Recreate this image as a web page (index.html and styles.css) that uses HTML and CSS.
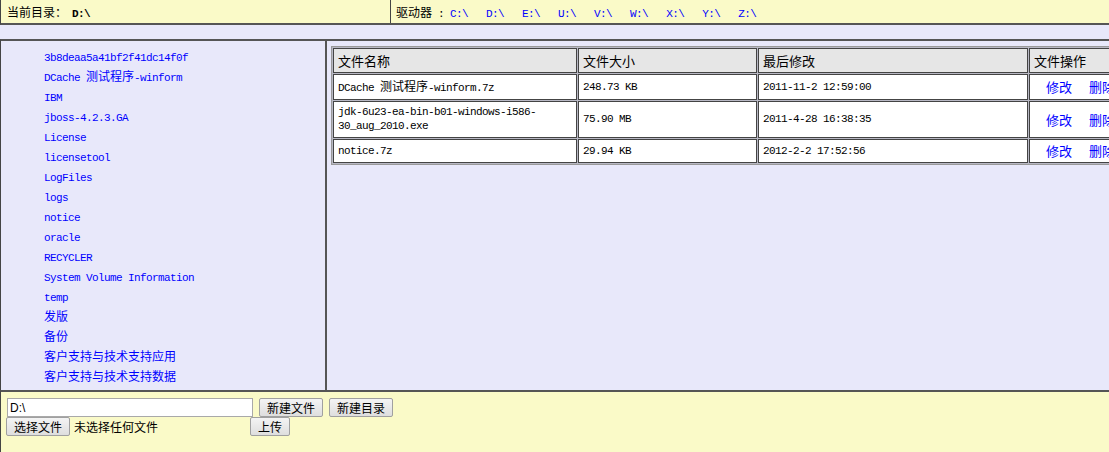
FILE: index.html
```html
<!DOCTYPE html>
<html lang="zh">
<head>
<meta charset="utf-8">
<title>文件管理</title>
<link rel="stylesheet" href="styles.css">
</head>
<body>
<div class="top">
  <div class="cur"><span class="c">当前目录：</span><b class="m path">D:\</b></div>
  <div class="drives"><span class="c">驱动器</span><span class="m"> : </span><a class="m drv" href="#">C:\</a><a class="m drv" href="#">D:\</a><a class="m drv" href="#">E:\</a><a class="m drv" href="#">U:\</a><a class="m drv" href="#">V:\</a><a class="m drv" href="#">W:\</a><a class="m drv" href="#">X:\</a><a class="m drv" href="#">Y:\</a><a class="m drv" href="#">Z:\</a></div>
</div>
<div class="gap"></div>
<div class="main">
  <div class="left">
    <ul class="dirs">
      <li><a class="m" href="#">3b8deaa5a41bf2f41dc14f0f</a></li>
      <li><a class="m" href="#">DCache <span class="c">测试程序</span>-winform</a></li>
      <li><a class="m" href="#">IBM</a></li>
      <li><a class="m" href="#">jboss-4.2.3.GA</a></li>
      <li><a class="m" href="#">License</a></li>
      <li><a class="m" href="#">licensetool</a></li>
      <li><a class="m" href="#">LogFiles</a></li>
      <li><a class="m" href="#">logs</a></li>
      <li><a class="m" href="#">notice</a></li>
      <li><a class="m" href="#">oracle</a></li>
      <li><a class="m" href="#">RECYCLER</a></li>
      <li><a class="m" href="#">System Volume Information</a></li>
      <li><a class="m" href="#">temp</a></li>
      <li><a class="c" href="#">发版</a></li>
      <li><a class="c" href="#">备份</a></li>
      <li><a class="c" href="#">客户支持与技术支持应用</a></li>
      <li><a class="c" href="#">客户支持与技术支持数据</a></li>
    </ul>
  </div>
  <div class="right">
    <table class="files">
      <colgroup>
        <col class="w-name"><col class="w-size"><col class="w-date"><col class="w-ops">
      </colgroup>
      <thead>
        <tr><th>文件名称</th><th>文件大小</th><th>最后修改</th><th>文件操作</th></tr>
      </thead>
      <tbody>
        <tr>
          <td class="m">DCache <span class="c">测试程序</span>-winform.7z</td>
          <td class="m">248.73 KB</td>
          <td class="m">2011-11-2 12:59:00</td>
          <td class="ops"><a href="#" class="edit">修改</a><a href="#">删除</a></td>
        </tr>
        <tr class="tall">
          <td class="m">jdk-6u23-ea-bin-b01-windows-i586-<br>30_aug_2010.exe</td>
          <td class="m">75.90 MB</td>
          <td class="m">2011-4-28 16:38:35</td>
          <td class="ops"><a href="#" class="edit">修改</a><a href="#">删除</a></td>
        </tr>
        <tr>
          <td class="m">notice.7z</td>
          <td class="m">29.94 KB</td>
          <td class="m">2012-2-2 17:52:56</td>
          <td class="ops"><a href="#" class="edit">修改</a><a href="#">删除</a></td>
        </tr>
      </tbody>
    </table>
  </div>
</div>
<div class="bottom">
  <div class="row1">
    <input class="pathbox" type="text" value="D:\">
    <button class="btn b4">新建文件</button>
    <button class="btn b4">新建目录</button>
  </div>
  <div class="row2">
    <button class="btn b4 choose">选择文件</button>
    <span class="nofile">未选择任何文件</span>
    <button class="btn b2">上传</button>
  </div>
</div>
</body>
</html>
```

FILE: styles.css
```css
html, body {
  margin: 0;
  padding: 0;
}
body {
  width: 1109px;
  height: 452px;
  overflow: hidden;
  background: #e8e8fa;
  font-family: "Noto Sans CJK SC", "Liberation Sans", sans-serif;
  font-size: 12px;
  color: #000;
  display: flex;
  flex-direction: column;
}
a { color: #0000ff; text-decoration: none; }

.m {
  font-family: "Liberation Mono", "Noto Sans CJK SC", monospace;
  font-size: 11px;
  letter-spacing: -0.6px;
}
.c {
  font-family: "Noto Sans CJK SC", sans-serif;
  font-size: 12px;
  letter-spacing: 0;
}

/* top bar */
.top {
  height: 23px;
  flex: none;
  display: flex;
  background: #fafac8;
  border-left: 1px solid #444;
  border-bottom: 2px solid #555;
  line-height: 23px;
}
.cur {
  width: 383px;
  padding-left: 6px;
  border-right: 1px solid #444;
  white-space: nowrap;
}
.path { margin-left: 5px; font-weight: bold; }
.drives {
  padding-left: 5px;
  white-space: nowrap;
}
.drv { margin-right: 18px; }

.gap { height: 14px; flex: none; }

/* main area */
.main {
  flex: none;
  height: 349px;
  display: flex;
  border-top: 2px solid #555;
  border-left: 1px solid #444;
}
.left {
  width: 324px;
  flex: none;
  border-right: 2px solid #555;
  overflow: hidden;
}
.dirs {
  list-style: none;
  margin: 0;
  padding: 5px 0 0 43px;
}
.dirs li {
  height: 20px;
  line-height: 20px;
  white-space: nowrap;
}
.right {
  flex: 1;
  overflow: hidden;
  padding: 5px 0 0 4px;
}

.files {
  table-layout: fixed;
  width: 830px;
  border: 1px solid #999;
  border-spacing: 1px;
  background: #b8b8c4;
}
.w-name { width: 244px; }
.w-size { width: 179px; }
.w-date { width: 270px; }
.w-ops { width: 130px; }
.files th, .files td {
  border: 1px solid #444;
  padding: 4px 4px;
  text-align: left;
  white-space: nowrap;
  overflow: hidden;
}
.files th {
  background: #e6e6e6;
  font-weight: normal;
  font-size: 13px;
  line-height: 15px;
}
.files td {
  background: #fff;
  line-height: 14px;
}
.files .tall td {
  line-height: 13.5px;
}
.files .ops {
  padding-left: 16px;
}
.ops a {
  font-size: 13px;
}
.ops .edit { margin-right: 17px; }

/* bottom */
.bottom {
  flex: 1;
  background: #fafac8;
  border-top: 2px solid #555;
  border-left: 1px solid #444;
  padding-top: 6px;
}
.row1, .row2 {
  display: flex;
  align-items: center;
  height: 19px;
}
.row1 { padding-left: 6px; }
.row2 { padding-left: 5px; }
.pathbox {
  box-sizing: border-box;
  width: 246px;
  height: 19px;
  margin: 0 6px 0 0;
  padding: 0 2px;
  border: 1px solid #a9a9a9;
  background: #fff;
  font-family: "Liberation Sans", sans-serif;
  font-size: 12px;
  color: #000;
  outline: none;
}
.btn {
  box-sizing: border-box;
  height: 19px;
  margin: 0 6px 0 0;
  padding: 0;
  border: 1px solid #a0a0a0;
  border-radius: 2px;
  background: linear-gradient(#f4f4f4, #dedede);
  font-family: "Noto Sans CJK SC", sans-serif;
  font-size: 12px;
  line-height: 17px;
  color: #000;
}
.b4 { width: 64px; }
.b2 { width: 40px; }
.choose { margin-right: 4px; }
.nofile {
  display: inline-block;
  width: 176px;
  font-size: 12px;
  line-height: 19px;
}
```
